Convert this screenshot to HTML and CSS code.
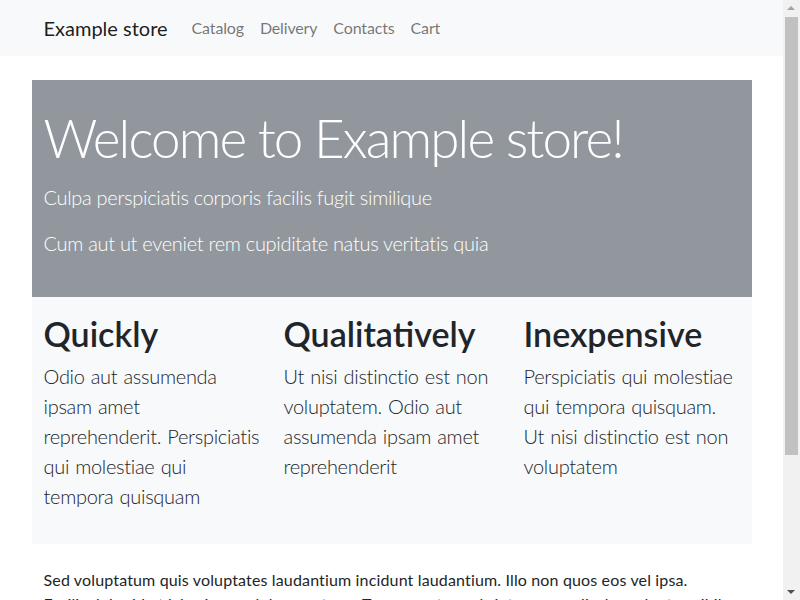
FILE: index.html
```html
<!DOCTYPE html>
<html lang="en">
<head>
<meta charset="utf-8">
<title>Example store</title>
<link rel="stylesheet" href="styles.css">
</head>
<body>
<div class="page">
  <nav class="navbar">
    <div class="container nav-inner">
      <a class="brand" href="#">Example store</a>
      <ul class="nav-links">
        <li><a href="#">Catalog</a></li>
        <li><a href="#">Delivery</a></li>
        <li><a href="#">Contacts</a></li>
        <li><a href="#">Cart</a></li>
      </ul>
    </div>
  </nav>
  <main class="main">
    <section class="container hero">
      <h1 class="hero-title">Welcome to Example store!</h1>
      <p class="lead">Culpa perspiciatis corporis facilis fugit similique</p>
      <p class="lead">Cum aut ut eveniet rem cupiditate natus veritatis quia</p>
    </section>
    <section class="container features">
      <div class="feature">
        <h2>Quickly</h2>
        <p class="lead">Odio aut assumenda ipsam amet reprehenderit. Perspiciatis qui molestiae qui tempora quisquam</p>
      </div>
      <div class="feature">
        <h2>Qualitatively</h2>
        <p class="lead">Ut nisi distinctio est non voluptatem. Odio aut assumenda ipsam amet reprehenderit</p>
      </div>
      <div class="feature">
        <h2>Inexpensive</h2>
        <p class="lead">Perspiciatis qui molestiae qui tempora quisquam. Ut nisi distinctio est non voluptatem</p>
      </div>
    </section>
    <section class="container text">
      <p>Sed voluptatum quis voluptates laudantium incidunt laudantium. Illo non quos eos vel ipsa. Facilis dolor id et laboriosam dolorem atque. Tempora et quod sint quas explicabo voluptas nihil est ipsam laudantium. Consequatur aperiam illum ipsum dolorem, sint eius aspernatur nisi cupiditate et quibusdam.</p>
      <p>Ut nisi distinctio est non voluptatem. Odio aut assumenda ipsam amet reprehenderit. Perspiciatis qui molestiae qui tempora quisquam. Culpa perspiciatis corporis facilis fugit similique. Cum aut ut eveniet rem cupiditate natus veritatis quia.</p>
      <p>Odio aut assumenda ipsam amet reprehenderit. Perspiciatis qui molestiae qui tempora quisquam. Sed voluptatum quis voluptates laudantium incidunt laudantium. Illo non quos eos vel ipsa.</p>
      <p>Perspiciatis qui molestiae qui tempora quisquam. Ut nisi distinctio est non voluptatem. Odio aut assumenda ipsam amet reprehenderit.</p>
    </section>
  </main>
</div>
<div class="scrollbar" aria-hidden="true">
  <span class="sb-arrow sb-up"></span>
  <span class="sb-thumb"></span>
  <span class="sb-arrow sb-down"></span>
</div>
</body>
</html>
```
FILE: styles.css
```css
* { box-sizing: border-box; }
html, body { margin: 0; }
body {
  font-family: Lato, "Open Sans", sans-serif;
  font-size: 16px;
  line-height: 1.5;
  color: #212529;
  background: #fff;
}
.page { margin-right: 17px; }
.container {
  width: 720px;
  margin: 0 auto;
  padding: 0 12px;
}
.navbar {
  background: #f8f9fa;
  padding: 8px 0;
}
.nav-inner {
  display: flex;
  align-items: center;
}
.brand {
  font-size: 20px;
  line-height: 30px;
  padding: 5px 0;
  margin-right: 16px;
  color: rgba(0,0,0,.9);
  text-decoration: none;
}
.nav-links {
  display: flex;
  list-style: none;
  margin: 0;
  padding: 0;
}
.nav-links a {
  display: block;
  padding: 8px 8px;
  color: rgba(0,0,0,.55);
  text-decoration: none;
  line-height: 24px;
  letter-spacing: -0.15px;
}
.main { padding-top: 24px; }
.hero {
  background: #91979d;
  color: #fff;
  padding-top: 24px;
  padding-bottom: 23px;
}
.hero-title {
  margin: 0 0 11px;
  font-size: 53px;
  letter-spacing: -1.9px;
  font-weight: 300;
  line-height: 67px;
}
.lead {
  font-size: 20px;
  font-weight: 300;
  letter-spacing: -0.3px;
  line-height: 30px;
  margin: 0 0 16px;
}
.features {
  background: #f8f9fa;
  display: grid;
  grid-template-columns: repeat(3, 1fr);
  padding: 18px 0 17px;
}
.feature { padding: 0 12px; }
.feature h2 {
  margin: 0 0 8px;
  font-size: 34px;
  font-weight: 600;
  line-height: 38px;
}
.feature .lead { word-spacing: 1px; }
.text { padding-top: 24px; }
.text p {
  margin: 0 0 16px;
  max-width: 680px;
  letter-spacing: 0.15px;
}

.scrollbar {
  position: fixed;
  top: 0;
  right: 0;
  width: 17px;
  height: 100vh;
  background: #f1f1f1;
}
.sb-thumb {
  position: absolute;
  left: 2px;
  right: 2px;
  top: 17px;
  height: 438px;
  background: #c1c1c1;
}
.sb-arrow {
  position: absolute;
  left: 4px;
  width: 0;
  height: 0;
  border-left: 4px solid transparent;
  border-right: 4px solid transparent;
}
.sb-up {
  top: 6px;
  border-bottom: 4px solid #a3a3a3;
}
.sb-down {
  bottom: 6px;
  border-top: 4px solid #505050;
}
```
